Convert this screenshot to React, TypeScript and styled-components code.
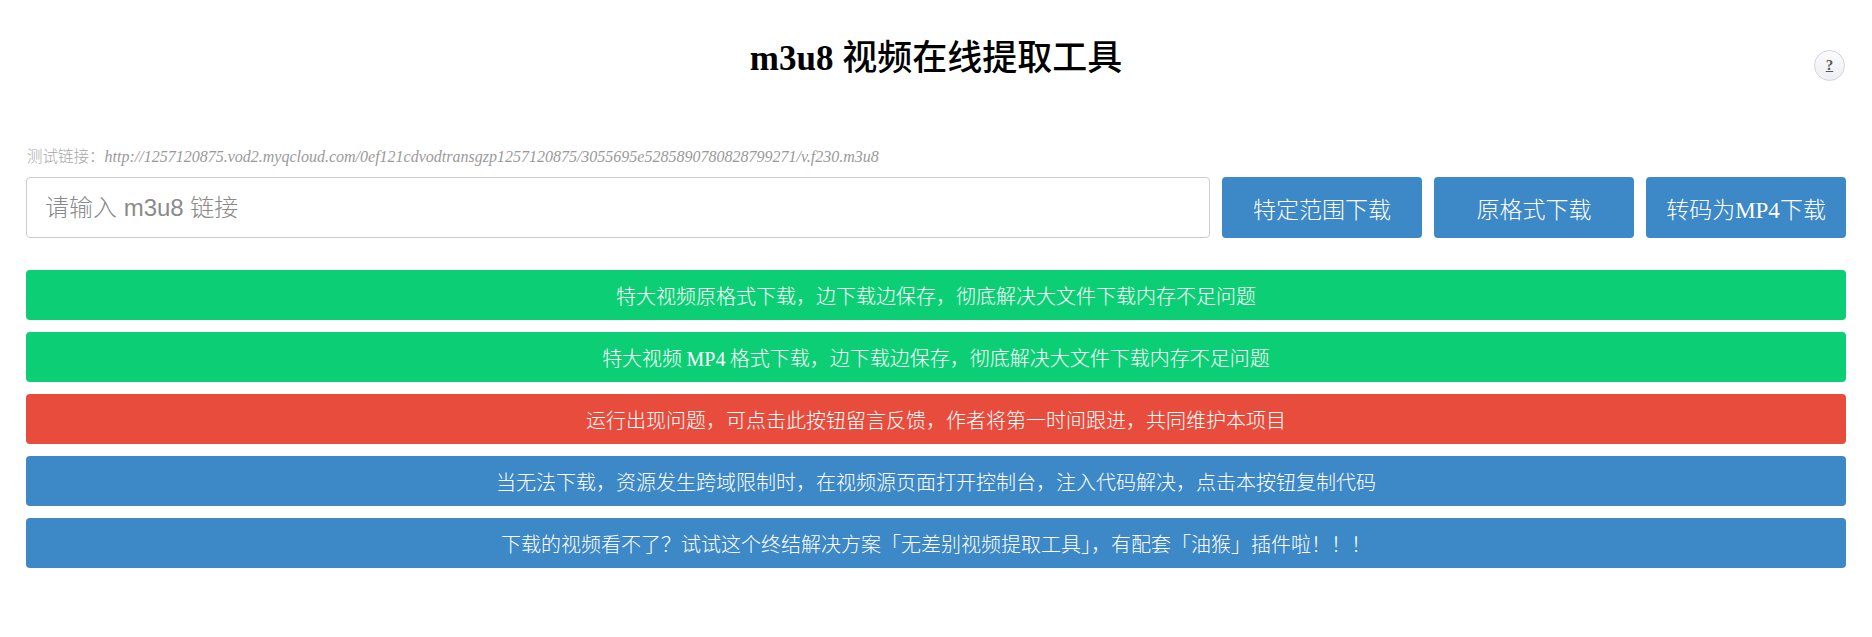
import React from "react";
import styled, { createGlobalStyle } from "styled-components";

const Global = createGlobalStyle`
  html, body { margin: 0; padding: 0; background: #fff; }
  body { font-family: "Liberation Serif", "Noto Sans CJK SC", serif; }
  * { box-sizing: border-box; }
`;

const Page = styled.div`
  width: 100%;
  padding: 0 26px;
`;

const Header = styled.header`
  display: grid;
  grid-template-columns: 1fr auto 1fr;
  padding-top: 34px;
`;

const Title = styled.h1`
  grid-column: 2;
  margin: 0;
  font-family: "Liberation Serif", "Noto Sans CJK SC", serif;
  font-size: 35px;
  line-height: 42px;
  font-weight: 700;
  color: #000;
  white-space: nowrap;
`;

const TitleCjk = styled.span`
  font-family: "Noto Sans CJK SC", sans-serif;
  font-weight: 500;
`;

const Help = styled.button`
  grid-column: 3;
  justify-self: end;
  align-self: start;
  margin-top: 16px;
  margin-right: 1px;
  width: 31px;
  height: 31px;
  border-radius: 50%;
  border: 1px solid #d4d4d8;
  background: linear-gradient(#fbfbfd, #eeeff3);
  color: #555;
  font-family: "Liberation Serif", serif;
  font-size: 15px;
  font-weight: 700;
  text-decoration: underline;
  padding: 0;
  display: flex;
  align-items: center;
  justify-content: center;
`;

const Sample = styled.p`
  margin: 64px 0 0;
  font-family: "Liberation Serif", "Noto Sans CJK SC", serif;
  font-style: italic;
  font-size: 16px;
  line-height: 20px;
  color: #9a9a9a;
  padding-left: 1px;
  white-space: nowrap;
`;

const SampleCjk = styled.span`
  font-family: "Noto Sans CJK SC", sans-serif;
  font-style: normal;
  font-weight: 300;
  font-size: 15.5px;
  color: #a8a8a8;
`;

const Controls = styled.div`
  display: flex;
  gap: 12px;
  margin-top: 10px;
  height: 61px;
`;

const UrlInput = styled.input`
  flex: 1;
  min-width: 0;
  height: 100%;
  border: 1px solid #ccc;
  border-radius: 4px;
  padding: 0 18px;
  font-family: "Liberation Sans", "Noto Sans CJK SC", sans-serif;
  font-size: 24px;
  color: #333;
  outline: none;
  &::placeholder {
    color: #8a8a8a;
    font-weight: 300;
  }
`;

const ActionButton = styled.button`
  flex: 0 0 200px;
  height: 100%;
  border: none;
  border-radius: 4px;
  background: #3d88c6;
  color: #fff;
  font-family: "Liberation Serif", "Noto Sans CJK SC", serif;
  font-size: 23px;
  padding: 0;
  cursor: pointer;
`;

const Cjk = styled.span`
  font-family: "Noto Sans CJK SC", sans-serif;
  font-weight: 300;
`;

const Bars = styled.div`
  display: flex;
  flex-direction: column;
  gap: 12px;
  margin-top: 32px;
`;

const Bar = styled.button<{ $tone: "green" | "red" | "blue" }>`
  width: 100%;
  height: 50px;
  border: none;
  border-radius: 4px;
  color: #fff;
  font-family: "Liberation Serif", "Noto Sans CJK SC", serif;
  font-size: 20px;
  padding: 0;
  cursor: pointer;
  background: ${(p) =>
    p.$tone === "green" ? "#0ccf75" : p.$tone === "red" ? "#e74c3c" : "#3d88c6"};
`;

const bars: { tone: "green" | "red" | "blue"; parts: string[] }[] = [
  { tone: "green", parts: ["特大视频原格式下载，边下载边保存，彻底解决大文件下载内存不足问题"] },
  { tone: "green", parts: ["特大视频 ", "MP4", " 格式下载，边下载边保存，彻底解决大文件下载内存不足问题"] },
  { tone: "red", parts: ["运行出现问题，可点击此按钮留言反馈，作者将第一时间跟进，共同维护本项目"] },
  { tone: "blue", parts: ["当无法下载，资源发生跨域限制时，在视频源页面打开控制台，注入代码解决，点击本按钮复制代码"] },
  { tone: "blue", parts: ["下载的视频看不了？试试这个终结解决方案「无差别视频提取工具」，有配套「油猴」插件啦！！！"] },
];

export default function App() {
  return (
    <Page>
      <Global />
      <Header>
        <Title>
          m3u8 <TitleCjk>视频在线提取工具</TitleCjk>
        </Title>
        <Help aria-label="帮助">?</Help>
      </Header>
      <Sample>
        <SampleCjk>测试链接：</SampleCjk>
        http://1257120875.vod2.myqcloud.com/0ef121cdvodtransgzp1257120875/3055695e5285890780828799271/v.f230.m3u8
      </Sample>
      <Controls>
        <UrlInput placeholder="请输入 m3u8 链接" />
        <ActionButton><Cjk>特定范围下载</Cjk></ActionButton>
        <ActionButton><Cjk>原格式下载</Cjk></ActionButton>
        <ActionButton><Cjk>转码为</Cjk>MP4<Cjk>下载</Cjk></ActionButton>
      </Controls>
      <Bars>
        {bars.map((b, i) => (
          <Bar key={i} $tone={b.tone}>
            {b.parts.map((t, j) =>
              /^[A-Z0-9]+$/.test(t) ? <span key={j}>{t}</span> : <Cjk key={j}>{t}</Cjk>
            )}
          </Bar>
        ))}
      </Bars>
    </Page>
  );
}
